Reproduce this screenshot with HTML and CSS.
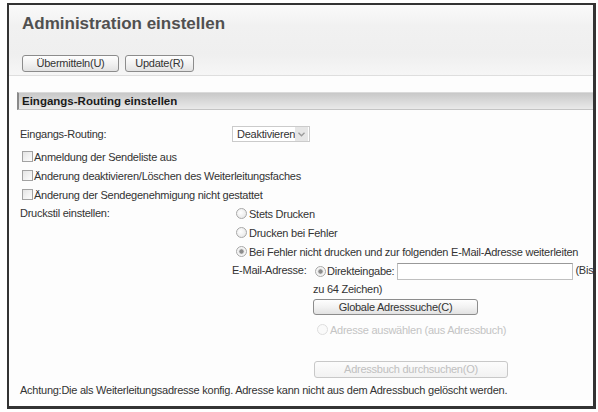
FILE: index.html
```html
<!DOCTYPE html>
<html lang="de">
<head>
    <meta charset="UTF-8">
    <title>Administration einstellen</title>
    <link rel="stylesheet" href="styles.css">
</head>
<body>
    <div class="frame">
        <div class="head">
            <h1 class="title">Administration einstellen</h1>
            <div class="toolbar">
                <button type="button" class="btn btn-submit">Übermitteln(U)</button>
                <button type="button" class="btn btn-update">Update(R)</button>
            </div>
        </div>

        <h2 class="section-title">Eingangs-Routing einstellen</h2>

        <div class="form">
            <div class="row row-routing">
                <span class="label">Eingangs-Routing:</span>
                <div class="select">
                    <span class="select-text">Deaktivieren</span>
                    <span class="select-arrow">
                        <svg width="7" height="5" viewBox="0 0 7 5"><path d="M0.5 0.8 L3.5 3.8 L6.5 0.8" fill="none" stroke="#9a9a9a" stroke-width="1.3"/></svg>
                    </span>
                </div>
            </div>

            <label class="check"><input type="checkbox">Anmeldung der Sendeliste aus</label>
            <label class="check"><input type="checkbox">Änderung deaktivieren/Löschen des Weiterleitungsfaches</label>
            <label class="check"><input type="checkbox">Änderung der Sendegenehmigung nicht gestattet</label>

            <div class="row">
                <span class="label">Druckstil einstellen:</span>
                <div class="value">
                    <label class="radio"><input type="radio" name="print">Stets Drucken</label>
                    <label class="radio"><input type="radio" name="print">Drucken bei Fehler</label>
                    <label class="radio"><input type="radio" name="print" checked>Bei Fehler nicht drucken und zur folgenden E-Mail-Adresse weiterleiten</label>

                    <div class="mail">
                        <span class="mail-label">E-Mail-Adresse:</span>
                        <div class="mail-value">
                            <div class="direct"><label class="radio radio-inline"><input type="radio" name="dest" checked>Direkteingabe:</label><input type="text" class="text-input">(Bis zu 64 Zeichen)</div>
                            <button type="button" class="btn btn-search">Globale Adresssuche(C)</button>
                            <label class="radio disabled"><input type="radio" name="dest" disabled>Adresse auswählen (aus Adressbuch)</label>
                            <button type="button" class="btn btn-book" disabled>Adressbuch durchsuchen(O)</button>
                        </div>
                    </div>
                </div>
            </div>

            <p class="note">Achtung:Die als Weiterleitungsadresse konfig. Adresse kann nicht aus dem Adressbuch gelöscht werden.</p>
        </div>
    </div>
</body>
</html>
```

FILE: styles.css
```css
* { box-sizing: border-box; }

body {
    margin: 0;
    background: #fff;
    font-family: "Liberation Sans", Arial, sans-serif;
    font-size: 11px;
    letter-spacing: -0.25px;
    color: #333;
}

.frame {
    margin: 3px 2px 3px 7px;
    height: 406px;
    border: 2px solid #333;
    border-right-width: 3px;
    border-bottom-width: 3px;
    background: #fdfdfd;
    overflow: hidden;
}

/* page header */
.head {
    height: 71px;
    padding: 9px 13px 0;
    background: linear-gradient(#fafafa, #f1f1f1 30%, #efefef 70%, #f6f6f6);
    border-bottom: 1px solid #dedede;
}

.title {
    margin: 0;
    font: bold 17px "Liberation Sans", Arial, sans-serif;
    letter-spacing: 0;
    line-height: 20px;
    color: #505050;
}

.toolbar {
    display: flex;
    gap: 6px;
    margin-top: 21px;
}

.btn {
    height: 17px;
    padding: 0;
    border: 1px solid #8c8c8c;
    border-radius: 3px;
    background: linear-gradient(#fefefe, #f2f2f2 50%, #e2e2e2);
    font-family: "Liberation Sans", Arial, sans-serif;
    font-size: 11px;
    letter-spacing: -0.25px;
    color: #333;
    line-height: 15px;
}

.btn-submit { width: 97px; }
.btn-update { width: 69px; }

/* section bar */
.section-title {
    margin: 16px 0 0 8px;
    height: 18px;
    padding-left: 3px;
    border-left: 2px solid #8a8a8a;
    border-top: 1px solid #dadada;
    border-bottom: 1px solid #c4c4c4;
    background: linear-gradient(#c8c8c8, #d9d9d9 50%, #e9e9e9);
    font: bold 11.5px "Liberation Sans", Arial, sans-serif;
    letter-spacing: 0;
    line-height: 16px;
    color: #1a1a1a;
}

/* form rows */
.form {
    padding: 13px 0 0 11px;
}

.row {
    display: flex;
}

.label {
    flex: none;
    width: 212px;
    line-height: 19px;
}

.value {
    flex: none;
}

.row-routing {
    height: 22px;
    align-items: center;
    margin-bottom: 2px;
}

.select {
    display: flex;
    align-items: center;
    width: 78px;
    height: 16px;
    border: 1px solid #cbcbcb;
    background: #fff;
}

.select-text {
    flex: 1;
    padding-left: 4px;
}

.select-arrow {
    display: flex;
    align-items: center;
    justify-content: center;
    width: 14px;
    height: 14px;
    margin-right: 1px;
    background: #e6e6e6;
}

.check,
.radio {
    display: flex;
    align-items: center;
    height: 19px;
    white-space: nowrap;
}

.check { padding-left: 2px; }

.check input,
.radio input {
    appearance: none;
    flex: none;
    width: 11px;
    height: 11px;
    margin: 0 1px 0 0;
    border: 1px solid #a2a2a2;
    background: linear-gradient(135deg, #e4e4e4, #fdfdfd);
}

.radio input {
    margin: 0 2px 0 4px;
    border-color: #a8a8a8;
    border-radius: 50%;
    background: radial-gradient(circle at 40% 40%, #fff, #e2e2e2);
}

.radio input:checked {
    background: radial-gradient(circle, #8c8c8c 0 1.8px, #d8d8d8 2.4px, #f6f6f6 3.4px);
}

.radio.disabled { color: #c4c4c4; }
.radio.disabled input { border-color: #dedede; background: #fafafa; }

/* e-mail destination */
.mail {
    display: flex;
}

.mail-label {
    flex: none;
    width: 81px;
    line-height: 19px;
    white-space: nowrap;
}

.mail-value {
    width: 290px;
}

.direct {
    line-height: 18px;
}

.radio-inline {
    display: inline-flex;
    height: auto;
    vertical-align: middle;
}

.radio-inline input { margin: 0 1px 0 2px; }

.text-input {
    width: 176px;
    height: 17px;
    margin: 0 2px 0 3px;
    padding: 0;
    border: 1px solid #c0c0c0;
    border-top-color: #999;
    vertical-align: middle;
}

.btn-search {
    display: block;
    width: 165px;
    height: 16px;
    margin-top: 1px;
}

.mail-value .radio.disabled {
    margin-top: 5px;
}

.btn-book {
    display: block;
    width: 194px;
    height: 17px;
    margin: 22px 0 0 1px;
    border-color: #c8c8c8;
    background: linear-gradient(#fcfcfc, #f2f2f2);
    color: #c0c0c0;
}

.note {
    margin: 3px 0 0;
    line-height: 19px;
}
```
